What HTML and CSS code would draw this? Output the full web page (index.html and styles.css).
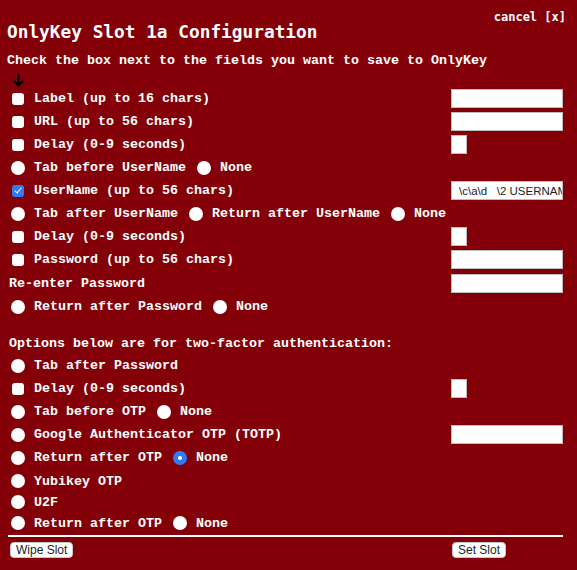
FILE: index.html
```html
<!DOCTYPE html>
<html>
<head>
<meta charset="utf-8">
<link rel="stylesheet" href="styles.css">
</head>
<body>
<div class="panel">
  <header class="head">
    <h1 class="title">OnlyKey Slot 1a Configuration</h1>
    <a class="cancel" href="#">cancel [x]</a>
  </header>
  <p class="intro">Check the box next to the fields you want to save to OnlyKey</p>
  <div class="arrow">
    <svg width="11" height="14" viewBox="0 0 11 14"><path d="M5.5 0.5 V12.5 M1 8 L5.5 12.5 L10 8" fill="none" stroke="#000" stroke-width="2"/></svg>
  </div>

  <div class="row"><label class="opt"><input type="checkbox" class="cb"><span>Label (up to 16 chars)</span></label><input class="field" type="text"></div>
  <div class="row"><label class="opt"><input type="checkbox" class="cb"><span>URL (up to 56 chars)</span></label><input class="field" type="text"></div>
  <div class="row"><label class="opt"><input type="checkbox" class="cb"><span>Delay (0-9 seconds)</span></label><input class="field small" type="text"></div>
  <div class="row"><div class="opt"><input type="radio" name="a" class="rd first"><span>Tab before UserName</span><input type="radio" name="a" class="rd"><span>None</span></div></div>
  <div class="row"><label class="opt"><input type="checkbox" class="cb" checked><span>UserName (up to 56 chars)</span></label><input class="field val" type="text" value="\c\a\d   \2 USERNAME"></div>
  <div class="row"><div class="opt"><input type="radio" name="b" class="rd first"><span>Tab after UserName</span><input type="radio" name="b" class="rd"><span>Return after UserName</span><input type="radio" name="b" class="rd"><span>None</span></div></div>
  <div class="row"><label class="opt"><input type="checkbox" class="cb"><span>Delay (0-9 seconds)</span></label><input class="field small" type="text"></div>
  <div class="row"><label class="opt"><input type="checkbox" class="cb"><span>Password (up to 56 chars)</span></label><input class="field" type="password"></div>
  <div class="row h24"><span class="plain">Re-enter Password</span><input class="field" type="password"></div>
  <div class="row"><div class="opt"><input type="radio" name="c" class="rd first"><span>Return after Password</span><input type="radio" name="c" class="rd"><span>None</span></div></div>

  <div class="row h22 section"><span class="plain">Options below are for two-factor authentication:</span></div>
  <div class="row"><div class="opt"><input type="radio" name="d" class="rd first"><span>Tab after Password</span></div></div>
  <div class="row"><label class="opt"><input type="checkbox" class="cb"><span>Delay (0-9 seconds)</span></label><input class="field small" type="text"></div>
  <div class="row"><div class="opt"><input type="radio" name="e" class="rd first"><span>Tab before OTP</span><input type="radio" name="e" class="rd"><span>None</span></div></div>
  <div class="row"><div class="opt"><input type="radio" name="f" class="rd first"><span>Google Authenticator OTP (TOTP)</span></div><input class="field" type="text"></div>
  <div class="row"><div class="opt"><input type="radio" name="g" class="rd first"><span>Return after OTP</span><input type="radio" name="g" class="rd" checked><span>None</span></div></div>
  <div class="row h24"><div class="opt"><input type="radio" name="f" class="rd first"><span>Yubikey OTP</span></div></div>
  <div class="row h18"><div class="opt"><input type="radio" name="f" class="rd first"><span>U2F</span></div></div>
  <div class="row h24"><div class="opt"><input type="radio" name="h" class="rd first"><span>Return after OTP</span><input type="radio" name="h" class="rd"><span>None</span></div></div>

  <hr class="rule">
  <div class="actions">
    <button class="btn">Wipe Slot</button>
    <div class="right-col"><button class="btn">Set Slot</button></div>
  </div>
</div>
</body>
</html>
```

FILE: styles.css
```css
html, body {
  margin: 0;
  padding: 0;
  background: #840008;
  height: 100%;
}
body {
  color: #fff;
  font-family: "Liberation Mono", "Courier New", monospace;
  font-weight: bold;
  font-size: 13.33px;
}
.panel {
  padding: 0 14px 0 7px;
}
.head {
  display: flex;
  justify-content: space-between;
  align-items: flex-start;
  height: 44px;
}
.title {
  margin: 21px 0 0 0;
  font-family: "DejaVu Sans Mono", monospace;
  font-size: 17.8px;
  line-height: 22px;
  font-weight: bold;
  color: #fff;
}
.cancel {
  margin-top: 10px;
  margin-right: -3px;
  font-family: "DejaVu Sans Mono", monospace;
  font-size: 12px;
  line-height: 14px;
  font-weight: bold;
  color: #fff;
  text-decoration: none;
}
.intro {
  margin: 9px 0 0 0;
  line-height: 16px;
  white-space: nowrap;
}
.arrow {
  height: 18px;
  padding-left: 6px;
  box-sizing: border-box;
  padding-top: 4px;
}
.arrow svg {
  display: block;
}
.row {
  display: flex;
  align-items: center;
  justify-content: space-between;
  height: 23px;
}
.row.h24 { height: 24px; }
.row.h22 { height: 22px; }
.row.h18 { height: 18px; }
.row.section { margin-top: 14px; }
.opt {
  display: flex;
  align-items: center;
  white-space: nowrap;
}
.plain {
  padding-left: 2px;
  white-space: nowrap;
}
.cb {
  appearance: none;
  -webkit-appearance: none;
  width: 12px;
  height: 12px;
  margin: 0 10px 0 5px;
  background: #fff;
  border-radius: 3px;
  border: none;
  position: relative;
}
.cb:checked {
  background: #2f7cf6;
}
.cb:checked::after {
  content: "";
  position: absolute;
  left: 4px;
  top: 1.5px;
  width: 3px;
  height: 6px;
  border: solid #fff;
  border-width: 0 1.6px 1.6px 0;
  transform: rotate(40deg);
}
.rd {
  appearance: none;
  -webkit-appearance: none;
  width: 14px;
  height: 14px;
  margin: 0 9px 0 11px;
  background: #fff;
  border-radius: 50%;
  border: none;
  position: relative;
}
.rd.first {
  margin-left: 4px;
}
.rd:checked {
  background: #2f7cf6;
}
.rd:checked::after {
  content: "";
  position: absolute;
  left: 5px;
  top: 5px;
  width: 4px;
  height: 4px;
  border-radius: 50%;
  background: #fff;
}
.field {
  box-sizing: border-box;
  width: 112px;
  height: 19px;
  margin: 0;
  padding: 0 4px;
  border: 1px solid #bdbdbd;
  background: #fff;
  outline: none;
  font-family: "Liberation Sans", Arial, sans-serif;
  font-weight: normal;
  font-size: 11.5px;
  color: #222;
}
.field.small {
  width: 16px;
  margin-right: 96px;
}
.field.val {
  padding-left: 7px;
  padding-right: 0;
}
.rule {
  margin: 0 0 0 1px;
  border: none;
  height: 2px;
  background: #fff;
}
.actions {
  display: flex;
  justify-content: space-between;
  align-items: center;
  margin-top: 5px;
}
.right-col {
  width: 112px;
}
.btn {
  margin: 0 0 0 3px;
  height: 16px;
  padding: 0 5px;
  background: #fff;
  border: 1px solid #c8c8c8;
  border-radius: 4px;
  font-family: "Liberation Sans", Arial, sans-serif;
  font-size: 12px;
  font-weight: normal;
  color: #222;
  line-height: 14px;
}
.right-col .btn {
  margin-left: 1px;
}
```
